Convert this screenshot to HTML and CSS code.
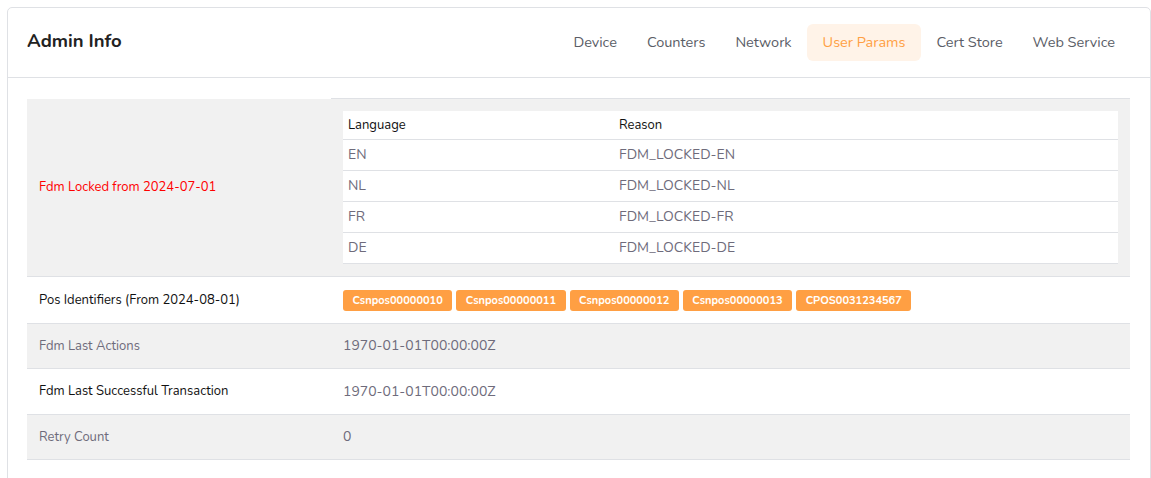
FILE: index.html
```html
<!DOCTYPE html>
<html>
<head>
<meta charset="utf-8">
<link rel="stylesheet" href="styles.css">
</head>
<body>
<div class="card">
  <div class="card-header">
    <h4 class="title">Admin Info</h4>
    <ul class="tabs">
      <li class="tab">Device</li>
      <li class="tab">Counters</li>
      <li class="tab">Network</li>
      <li class="tab active">User Params</li>
      <li class="tab">Cert Store</li>
      <li class="tab">Web Service</li>
    </ul>
  </div>
  <div class="card-body">
    <table class="info">
      <tr class="striped">
        <td class="label red">Fdm Locked from 2024-07-01</td>
        <td class="value">
          <table class="inner">
            <tr class="head"><th class="c1">Language</th><th>Reason</th></tr>
            <tr><td>EN</td><td>FDM_LOCKED-EN</td></tr>
            <tr><td>NL</td><td>FDM_LOCKED-NL</td></tr>
            <tr><td>FR</td><td>FDM_LOCKED-FR</td></tr>
            <tr><td>DE</td><td>FDM_LOCKED-DE</td></tr>
          </table>
        </td>
      </tr>
      <tr>
        <td class="label">Pos Identifiers (From 2024-08-01)</td>
        <td class="value">
          <div class="badges">
            <span class="badge">Csnpos00000010</span>
            <span class="badge">Csnpos00000011</span>
            <span class="badge">Csnpos00000012</span>
            <span class="badge">Csnpos00000013</span>
            <span class="badge">CPOS0031234567</span>
          </div>
        </td>
      </tr>
      <tr class="striped">
        <td class="label">Fdm Last Actions</td>
        <td class="value">1970-01-01T00:00:00Z</td>
      </tr>
      <tr>
        <td class="label">Fdm Last Successful Transaction</td>
        <td class="value tall">1970-01-01T00:00:00Z</td>
      </tr>
      <tr class="striped">
        <td class="label">Retry Count</td>
        <td class="value">0</td>
      </tr>
    </table>
  </div>
</div>
</body>
</html>
```
FILE: styles.css
```css
* { box-sizing: border-box; }
body {
  margin: 0;
  padding: 7px 0 0 7px;
  background: #fff;
  font-family: "Nunito", "Lato", "Noto Sans", sans-serif;
  color: #6e6b7b;
  overflow: hidden;
}
.card {
  width: 1144px;
  border: 1px solid #dfe1e5;
  border-radius: 5px;
  background: #fff;
  min-height: 480px;
}
.card-header {
  display: flex;
  align-items: center;
  justify-content: space-between;
  height: 70px;
  padding: 0 20px 0 19px;
  border-bottom: 1px solid #dfe1e5;
}
.title {
  margin: 0;
  font-size: 18.5px;
  font-weight: 700;
  color: #222;
  position: relative;
  top: -2px;
}
.tabs {
  display: flex;
  list-style: none;
  margin: 0;
  padding: 0;
  gap: 0;
}
.tab {
  padding: 9px 15px;
  height: 37px;
  font-size: 14.5px;
  color: #5a5d66;
  border-radius: 6px;
  line-height: 19px;
}
.tab.active {
  background: #fff3e8;
  color: #ff9f43;
  padding: 9px 16px;
}
.card-body {
  padding: 20px 19px 0 19px;
}
.info {
  width: 1103px;
  border-collapse: collapse;
  font-size: 13px;
}
.info > tbody > tr > td {
  border-bottom: 1px solid #dfe1e5;
  vertical-align: middle;
}
.info > tbody > tr:first-child > td.value {
  border-top: 1px solid #dfe1e5;
}
.striped { background: #f1f1f1; }
.label {
  width: 304px;
  padding: 0 12px;
  color: #111;
  font-size: 13px;
}
.striped .label { color: #6e6b7b; }
.label.red { color: #ff0000; }
.value {
  padding: 12px 12px 12px 12px;
  color: #6e6b7b;
  font-size: 14px;
  height: 45px;
}
.value.tall { height: 46px; }
.inner {
  width: 100%;
  border-collapse: collapse;
  background: #fff;
  margin: 0 0 0 0;
}
.inner th {
  text-align: left;
  font-weight: 400;
  color: #111;
  font-size: 13px;
  height: 28px;
  padding: 0 5px;
  border-bottom: 1px solid #dfe1e5;
}
.inner th.c1 { width: 271px; }
.inner td {
  height: 31px;
  padding: 0 5px;
  font-size: 14px;
  color: #6e6b7b;
  border-bottom: 1px solid #dfe1e5;
}
.badges {
  display: flex;
  gap: 4px;
  padding-top: 1px;
}
.badge {
  background: #ff9f43;
  color: #fff;
  font-size: 11px;
  font-weight: 700;
  height: 21px;
  line-height: 21px;
  padding: 0 9.5px;
  border-radius: 3px;
}
```
